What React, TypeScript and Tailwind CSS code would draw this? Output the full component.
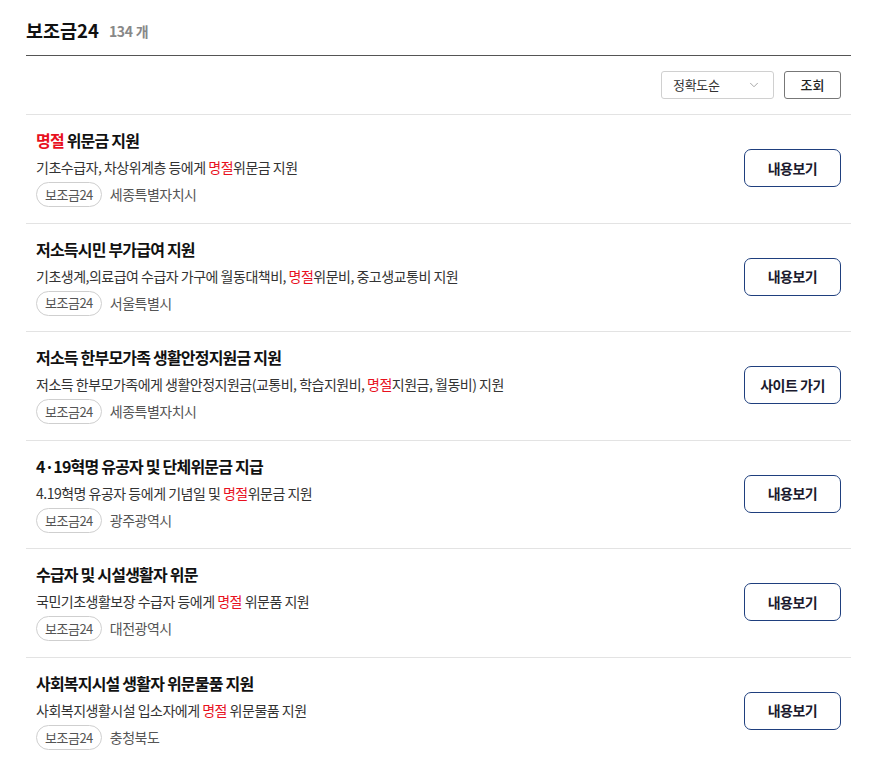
import { ChevronDown } from "lucide-react";

type Part = { t: string; red?: boolean };

interface Item {
  title: Part[];
  desc: Part[];
  region: string;
  action: string;
}

const items: Item[] = [
  {
    title: [{ t: "명절", red: true }, { t: " 위문금 지원" }],
    desc: [{ t: "기초수급자, 차상위계층 등에게 " }, { t: "명절", red: true }, { t: "위문금 지원" }],
    region: "세종특별자치시",
    action: "내용보기",
  },
  {
    title: [{ t: "저소득시민 부가급여 지원" }],
    desc: [
      { t: "기초생계,의료급여 수급자 가구에 월동대책비, " },
      { t: "명절", red: true },
      { t: "위문비, 중고생교통비 지원" },
    ],
    region: "서울특별시",
    action: "내용보기",
  },
  {
    title: [{ t: "저소득 한부모가족 생활안정지원금 지원" }],
    desc: [
      { t: "저소득 한부모가족에게 생활안정지원금(교통비, 학습지원비, " },
      { t: "명절", red: true },
      { t: "지원금, 월동비) 지원" },
    ],
    region: "세종특별자치시",
    action: "사이트 가기",
  },
  {
    title: [{ t: "4·19혁명 유공자 및 단체위문금 지급" }],
    desc: [{ t: "4.19혁명 유공자 등에게 기념일 및 " }, { t: "명절", red: true }, { t: "위문금 지원" }],
    region: "광주광역시",
    action: "내용보기",
  },
  {
    title: [{ t: "수급자 및 시설생활자 위문" }],
    desc: [{ t: "국민기초생활보장 수급자 등에게 " }, { t: "명절", red: true }, { t: " 위문품 지원" }],
    region: "대전광역시",
    action: "내용보기",
  },
  {
    title: [{ t: "사회복지시설 생활자 위문물품 지원" }],
    desc: [{ t: "사회복지생활시설 입소자에게 " }, { t: "명절", red: true }, { t: " 위문물품 지원" }],
    region: "충청북도",
    action: "내용보기",
  },
];

const Text = ({ parts }: { parts: Part[] }) => (
  <>
    {parts.map((p, i) =>
      p.red ? (
        <span key={i} className="text-[#e8101e]">
          {p.t}
        </span>
      ) : (
        <span key={i}>{p.t}</span>
      )
    )}
  </>
);

const App = () => {
  return (
    <div
      className="bg-white min-h-screen pl-[26px] pr-[24px] text-[#222]"
      style={{ fontFamily: '"Noto Sans CJK KR", "Noto Sans", sans-serif' }}
    >
      <div className="flex items-end gap-[10px] pt-[17px] pb-[12px] border-b border-[#555]">
        <h2 className="text-[18.5px] leading-[26px] font-bold text-[#111]">보조금24</h2>
        <span className="text-[14px] leading-[23px] font-bold text-[#888] tracking-[-0.3px]">134 개</span>
      </div>

      <div className="flex justify-end items-center gap-[10px] pt-[15px] pb-[15px] pr-[10px]">
        <div className="flex items-center justify-between w-[113px] h-[28px] pl-[11px] pr-[12px] border border-[#d0d0d0] rounded-[3px] text-[13px] text-[#333]">
          <span className="tracking-[-0.3px]">정확도순</span>
          <ChevronDown size={14} strokeWidth={1.5} className="text-[#999]" />
        </div>
        <button className="w-[57px] h-[28px] border border-[#777] rounded-[3px] text-[13px] text-[#222] font-medium">
          조회
        </button>
      </div>

      <ul>
        {items.map((item, index) => (
          <li
            key={index}
            className="flex items-center justify-between border-t border-[#e3e3e3] pl-[10px] pr-[10px] pt-[14px] pb-[15.6px]"
          >
            <div className="flex flex-col">
              <p className="text-[16px] leading-[22px] font-bold tracking-[-0.8px] text-[#111]">
                <Text parts={item.title} />
              </p>
              <p className="mt-[6px] text-[14px] leading-[20px] tracking-[-0.5px] text-[#333]">
                <Text parts={item.desc} />
              </p>
              <div className="mt-[5px] flex items-center gap-[8px]">
                <span className="h-[25px] px-[8px] flex items-center border border-[#cfcfcf] rounded-full text-[13px] tracking-[-0.5px] text-[#555]">
                  보조금24
                </span>
                <span className="text-[14px] tracking-[-0.5px] text-[#555]">{item.region}</span>
              </div>
            </div>
            <button className="w-[97px] h-[38px] shrink-0 border border-[#1f3f7e] rounded-[7px] text-[14px] font-bold tracking-[-0.5px] text-[#1a1a2e]">
              {item.action}
            </button>
          </li>
        ))}
      </ul>
    </div>
  );
};

export default App;
